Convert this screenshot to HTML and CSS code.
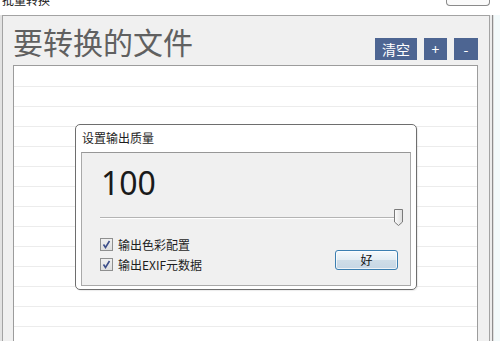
FILE: index.html
```html
<!DOCTYPE html>
<html lang="zh-CN">
<head>
<meta charset="utf-8">
<title>批量转换</title>
<link rel="stylesheet" href="styles.css">
</head>
<body>
<div class="titlebar">
  <span class="title">批量转换</span>
  <span class="close-btn"></span>
</div>
<div class="frame">
  <div class="lframe"></div>
  <div class="panel">
    <div class="header">
      <h1 class="heading">要转换的文件</h1>
      <div class="actions">
        <button class="act act-clear">清空</button>
        <button class="act act-add">+</button>
        <button class="act act-remove">-</button>
      </div>
    </div>
    <div class="list">
      <div class="dialog">
        <div class="dialog-title">设置输出质量</div>
        <div class="dialog-body">
          <div class="quality">100</div>
          <div class="slider">
            <div class="track"></div>
            <svg class="thumb" width="11" height="19" viewBox="0 0 11 19">
              <defs>
                <linearGradient id="tg" x1="0" y1="0" x2="1" y2="0">
                  <stop offset="0" stop-color="#fdfdfd"/>
                  <stop offset="1" stop-color="#dcdcdc"/>
                </linearGradient>
              </defs>
              <path d="M1.5 1.5 H9.5 V14 L5.5 17.5 L1.5 14 Z" fill="url(#tg)" stroke="#7a7a7a" stroke-width="1" stroke-linejoin="round"/>
            </svg>
          </div>
          <div class="bottom">
            <div class="checks">
              <label class="check"><span class="box"><svg width="11" height="11" viewBox="0 0 11 11"><path d="M2.5 5.5 L4.5 8.5 L8.5 2" fill="none" stroke="#3d4f8a" stroke-width="1.6"/></svg></span><span>输出色彩配置</span></label>
              <label class="check"><span class="box"><svg width="11" height="11" viewBox="0 0 11 11"><path d="M2.5 5.5 L4.5 8.5 L8.5 2" fill="none" stroke="#3d4f8a" stroke-width="1.6"/></svg></span><span>输出EXIF元数据</span></label>
            </div>
            <button class="ok">好</button>
          </div>
        </div>
      </div>
    </div>
  </div>
  <div class="rframe"></div>
</div>
</body>
</html>
```

FILE: styles.css
```css
html, body {
  margin: 0;
  padding: 0;
}
body {
  width: 500px;
  height: 341px;
  overflow: hidden;
  background: #ffffff;
  font-family: "Noto Sans CJK SC", "Noto Sans", sans-serif;
}
.titlebar {
  height: 15px;
  display: flex;
  justify-content: space-between;
  align-items: flex-start;
  padding-left: 2px;
  padding-right: 10px;
  overflow: hidden;
}
.title {
  font-size: 12px;
  line-height: 12px;
  margin-top: -6px;
  color: #222;
}
.close-btn {
  width: 42px;
  height: 5px;
  border: 1px solid #8a8a8a;
  border-top: none;
  border-radius: 0 0 4px 4px;
  background: #fafafa;
}
.frame {
  display: flex;
  height: 326px;
}
.lframe {
  width: 2px;
  background: #e2e2e2;
}
.rframe {
  width: 10px;
  background: linear-gradient(to right, #ececec 0 2px, #8e8e8e 2px 3px, #dedede 3px 4px, #f3fafb 4px);
}
.panel {
  flex: 0 0 488px;
  box-sizing: border-box;
  border: 1px solid #a3a3a3;
  border-bottom: none;
  background: #f0f0f0;
  padding: 0 11px 0 10px;
  display: flex;
  flex-direction: column;
}
.header {
  height: 49px;
  display: flex;
  justify-content: space-between;
}
.heading {
  margin: 10px 0 0 0;
  font-size: 30px;
  line-height: 30px;
  font-weight: 400;
  color: #606060;
}
.actions {
  align-self: flex-end;
  margin-bottom: 5px;
  display: flex;
  gap: 7px;
}
.act {
  height: 22px;
  border: none;
  padding: 0;
  background: #4d6592;
  color: #ffffff;
  font-family: "Noto Sans CJK SC", sans-serif;
  font-size: 14px;
  line-height: 22px;
}
.act-clear { width: 42px; }
.act-add { width: 23px; }
.act-remove { width: 24px; }
.list {
  position: relative;
  flex: 1;
  border: 1px solid #9c9c9c;
  border-bottom: none;
  background-color: #ffffff;
  background-image: repeating-linear-gradient(to bottom, transparent 0 19px, #ececec 19px 20px);
  background-position: 0 1px;
}
.dialog {
  position: absolute;
  left: 61px;
  top: 58px;
  width: 342px;
  height: 166px;
  box-sizing: border-box;
  border: 1px solid #6e6e6e;
  border-radius: 5px;
  background: #ffffff;
  padding: 5px 5px 3px 5px;
  display: flex;
  flex-direction: column;
  box-shadow: 1px 1px 1px rgba(0,0,0,0.08);
}
.dialog-title {
  font-size: 12px;
  line-height: 16px;
  color: #1e1e1e;
  padding-left: 1px;
}
.dialog-body {
  margin-top: 6px;
  flex: 1;
  border: 1px solid #a9a9a9;
  border-top-color: #979797;
  background: #f0f0f0;
  display: flex;
  flex-direction: column;
}
.quality {
  margin: 10px 0 0 19px;
  font-family: "Noto Sans", sans-serif;
  font-size: 32px;
  line-height: 40px;
  color: #1a1a1a;
}
.slider {
  margin: 5px 0 0 18px;
  width: 304px;
  height: 19px;
  position: relative;
  display: flex;
  align-items: center;
}
.track {
  width: 296px;
  height: 1px;
  border-top: 1px solid #b4b4b4;
  background: #ffffff;
}
.thumb {
  position: absolute;
  right: 0;
  top: 0;
}
.bottom {
  margin-top: 7px;
  display: flex;
  justify-content: space-between;
}
.checks {
  display: flex;
  flex-direction: column;
  padding-left: 18px;
}
.check {
  height: 20px;
  display: flex;
  align-items: center;
  gap: 5px;
  font-size: 12px;
  color: #1e1e1e;
}
.box {
  width: 11px;
  height: 11px;
  border: 1px solid #8e8f8f;
  background: linear-gradient(#f0f0f0, #dedede);
  display: flex;
}
.ok {
  align-self: flex-end;
  margin: 0 12px 4px 0;
  width: 63px;
  height: 20px;
  padding: 0;
  border: 1px solid #3c7fb1;
  border-radius: 3px;
  background: linear-gradient(#f5f9fc 0%, #e4edf3 50%, #cfdde8 51%, #c6d6e4 100%);
  box-shadow: inset 0 0 0 1px rgba(255,255,255,0.7);
  font-family: "Noto Sans CJK SC", sans-serif;
  font-size: 12px;
  line-height: 18px;
  color: #111;
}
```
